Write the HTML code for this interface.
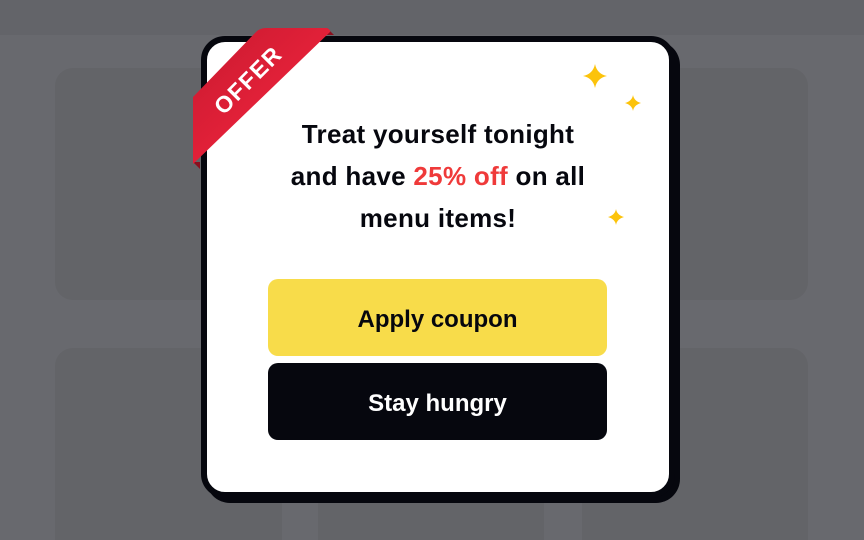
<!DOCTYPE html>
<html><head><style>
html,body{margin:0;padding:0;width:864px;height:540px;overflow:hidden}
body{background:#68696e;position:relative;font-family:"Liberation Sans",sans-serif}
.top{position:absolute;left:0;top:0;width:864px;height:35px;background:#636469}
.c{position:absolute;background:#636468;border-radius:18px}
.modal{position:absolute;left:201px;top:36px;width:462px;height:450px;background:#fff;border:6px solid #06070e;border-radius:24px;box-shadow:5px 5px 0 #06070e}
.txt{position:absolute;left:0;width:462px;top:71px;text-align:center;font-size:26px;line-height:42px;color:#06070e;font-weight:bold;letter-spacing:0.3px}
.txt b{color:#ef3a3a}
.btn{position:absolute;left:61px;width:339px;height:77px;border-radius:10px;font-size:24px;font-weight:bold;text-align:center;line-height:81px}
svg{position:absolute;left:0;top:0}
</style></head><body>
<div class="top"></div>
<div class="c" style="left:55px;top:68px;width:227px;height:232px"></div>
<div class="c" style="left:582px;top:68px;width:226px;height:232px"></div>
<div class="c" style="left:55px;top:348px;width:227px;height:192px;border-radius:18px 18px 0 0"></div>
<div class="c" style="left:318px;top:348px;width:226px;height:192px;border-radius:18px 18px 0 0"></div>
<div class="c" style="left:582px;top:348px;width:226px;height:192px;border-radius:18px 18px 0 0"></div>
<div class="modal">
<div class="txt">Treat yourself tonight<br>and have <b>25% off</b> on all<br>menu items!</div>
<div class="btn" style="top:237px;background:#f8dc4a;color:#06070e">Apply coupon</div>
<div class="btn" style="top:321px;background:#06070e;color:#fff">Stay hungry</div>
</div>
<svg width="864" height="540">
<defs><linearGradient id="g" x1="0" y1="0" x2="1" y2="1"><stop offset="0" stop-color="#c81a30"/><stop offset="1" stop-color="#fa2640"/></linearGradient></defs>
<polygon points="327,28 334,35 327,35" fill="#8a0f1e"/>
<polygon points="193,162 200,169 200,162" fill="#8a0f1e"/>
<path d="M193,97 L256,32 Q260,28 266,28 L327,28 Q331,30 330,32 L193,164 Z" fill="url(#g)"/>
<text x="248" y="88" transform="rotate(-45 248 80)" text-anchor="middle" fill="#fff" font-family="Liberation Sans" font-weight="bold" font-size="23" letter-spacing="1.5">OFFER</text>
<g fill="#fcc30b">
<path d="M595,64 Q597,74 607,76 Q597,78 595,88 Q593,78 583,76 Q593,74 595,64Z"/>
<path d="M633,95 Q634,101 641,103 Q634,105 633,111 Q632,105 625,103 Q632,101 633,95Z"/>
<path d="M616,209 Q617,215 624,217 Q617,219 616,225 Q615,219 608,217 Q615,215 616,209Z"/>
</g>
</svg>
</body></html>
